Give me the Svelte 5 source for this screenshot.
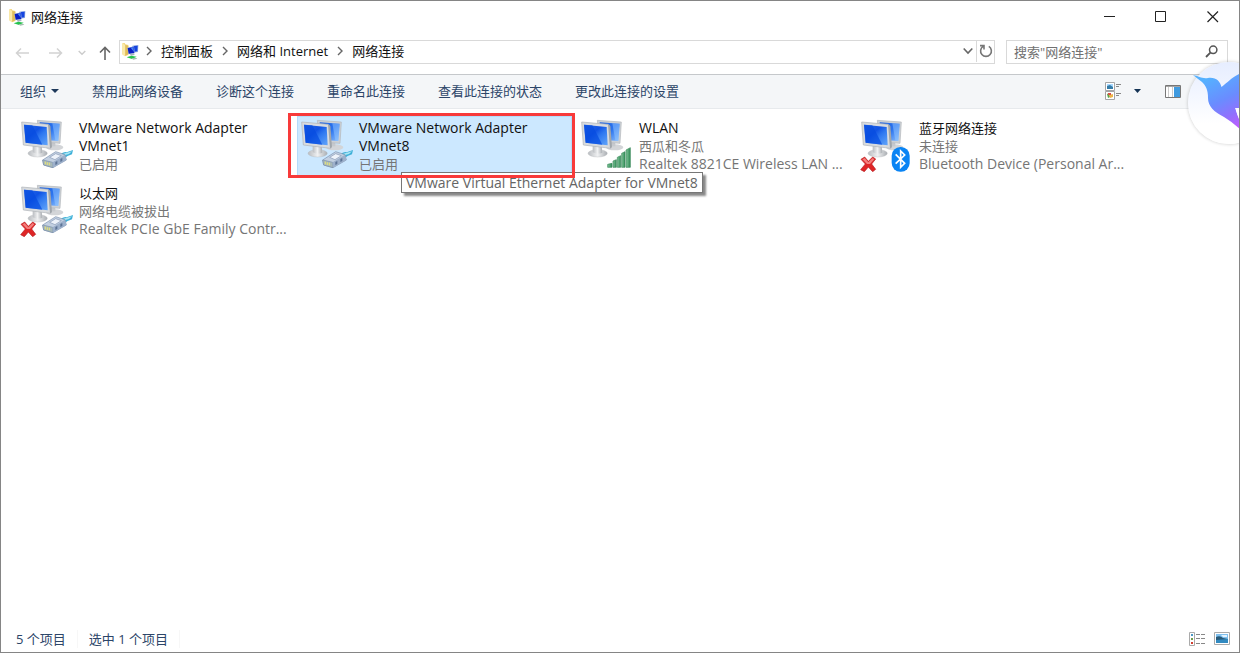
<script>
  const crumbs = ['控制面板', '网络和 Internet', '网络连接'];
  const commands = ['禁用此网络设备', '诊断这个连接', '重命名此连接', '查看此连接的状态', '更改此连接的设置'];
  const adapters = [
    { name: 'VMware Network Adapter VMnet1', lines: ['已启用'], badge: 'cable' },
    { name: 'VMware Network Adapter VMnet8', lines: ['已启用'], badge: 'cable', tip: 'VMware Virtual Ethernet Adapter for VMnet8' },
    { name: 'WLAN', lines: ['西瓜和冬瓜', 'Realtek 8821CE Wireless LAN ...'], badge: 'signal' },
    { name: '蓝牙网络连接', lines: ['未连接', 'Bluetooth Device (Personal Ar...'], badge: 'bluetooth', off: true },
    { name: '以太网', lines: ['网络电缆被拔出', 'Realtek PCIe GbE Family Contr...'], badge: 'cable', off: true }
  ];
  const isHan = (text) => /\p{Script=Han}/u.test(text);
  let selected = $state(1);
  let query = $state('');
</script>

{#snippet folderIcon()}
  <svg class="folder" width="17" height="17" viewBox="0 0 51 51" aria-hidden="true">
    <path d="M1 1L8 0L10 4L19 6V36L9 40L1 34Z" fill="#f3d77e" />
    <path d="M1 1L9 6V40L1 34Z" fill="#fbeaa9" />
    <path d="M10 6L19 8V34L10 38Z" fill="#dfbd5c" />
    <path d="M31 8L49 6L48 27L33 29Z" fill="#93aee0" />
    <path d="M32 9L47 8L46 25L34 26Z" fill="#1544e0" />
    <path d="M16 14L36 10L38 31L20 34Z" fill="#aebfdf" />
    <path d="M17 15L35 12L37 30L20 32Z" fill="#0a1fc4" />
    <path d="M26 14L34 13L36 27Z" fill="#4a86f5" />
    <path d="M24 33L36 31L38 36L26 38Z" fill="#a6b1bf" />
    <path d="M14 43L28 38L44 41L30 48Z" fill="#25c44c" />
    <path d="M28 46L42 44L46 47L34 50Z" fill="#a5bfb0" />
  </svg>
{/snippet}

{#snippet crumbArrow()}
  <svg class="crumb-arrow" width="24" height="12" viewBox="0 0 24 12" aria-hidden="true">
    <path d="M10 2L14 6L10 10" fill="none" stroke="#666" stroke-width="1.4" />
  </svg>
{/snippet}

{#snippet adapterIcon(badge, off)}
  <svg class="adapter-icon" width="55" height="55" viewBox="15 15 165 165" aria-hidden="true">
    <defs>
      <linearGradient id="screen" x1="0" y1="0" x2="1" y2="1">
        <stop offset="0" stop-color="#2c6be6" />
        <stop offset=".4" stop-color="#1053e4" />
        <stop offset=".6" stop-color="#2f78f0" />
        <stop offset="1" stop-color="#62a6fb" />
      </linearGradient>
      <linearGradient id="screenBack" x1="0" y1="0" x2="1" y2="1">
        <stop offset="0" stop-color="#1f62e0" />
        <stop offset=".5" stop-color="#2c74ee" />
        <stop offset="1" stop-color="#8cc0ff" />
      </linearGradient>
      <linearGradient id="stand" x1="0" y1="0" x2="1" y2="0">
        <stop offset="0" stop-color="#b9bcc0" />
        <stop offset=".5" stop-color="#f0f1f2" />
        <stop offset="1" stop-color="#a9adb2" />
      </linearGradient>
      <linearGradient id="bar" x1="0" y1="0" x2="1" y2="0">
        <stop offset="0" stop-color="#83c79c" />
        <stop offset="1" stop-color="#2f8a55" />
      </linearGradient>
    </defs>
    <ellipse cx="119" cy="106" rx="26" ry="9" fill="#d3d5d8" />
    <path d="M101 86H121V103H101Z" fill="#c6c9cd" />
    <path d="M67 25L139 30L135 94L74 90Z" fill="#cdd1d5" stroke="#b2b7bb" stroke-width="2" />
    <path d="M74 31L134 35L130 87L77 83Z" fill="url(#screenBack)" />
    <path d="M112 34L134 35L130 87L121 86Z" fill="#94c8ff" opacity=".5" />
    <ellipse cx="68" cy="124" rx="29" ry="11" fill="url(#stand)" stroke="#b0b3b7" />
    <path d="M53 100H80L82 122Q68 128 53 121Z" fill="url(#stand)" />
    <path d="M20 30L98 37Q103 38 103 43L107 109L25 99Z" fill="#d8dbde" stroke="#adb2b7" stroke-width="2" />
    <path d="M99 37L106 42L111 106L105 109Z" fill="#a1a6ab" />
    <path d="M27 38L95 45L98 100L32 92Z" fill="url(#screen)" />
    <path d="M27 38L52 40L82 98L32 92Z" fill="#064be0" opacity=".7" />
    {#if badge === 'cable'}
      <path d="M136 128Q145 118 155 121L174 114L171 127Q156 131 148 139Z" fill="#3fb0d8" />
      <path d="M145 125L171 118L162 126L148 130Z" fill="#a8e5f3" />
      <path d="M83 144L122 119L150 128L154 144L114 167L86 159Z" fill="#c3d0e1" stroke="#7a8fae" stroke-width="2" />
      <path d="M83 144L113 151L114 167L86 159Z" fill="#a9b9b8" stroke="#7a8fae" stroke-width="2" />
      <path d="M113 151L150 128L154 144L114 167Z" fill="#9db0cb" />
      <path d="M104 136L122 125L139 131L120 143Z" fill="#eef3fa" stroke="#8799b6" stroke-width="2" />
      <path d="M91 149V157M97 151V159M103 152V160" stroke="#e6e475" stroke-width="3" />
      <path d="M121 150L127 147V156L121 159ZM136 141L142 138V147L136 150Z" fill="#5d7496" />
    {:else if badge === 'signal'}
      <g fill="url(#bar)" stroke="#398a5a" stroke-width="2" transform="translate(4 0)">
        <path d="M94 157L107 154V166H94Z" />
        <path d="M110 147L120 143V166H110Z" />
        <path d="M123 136L133 131V166H123Z" />
        <path d="M136 124L146 119V166H136Z" />
        <path d="M149 114L162 107V166H149Z" />
      </g>
    {:else}
      <rect x="110" y="105" width="54" height="74" rx="26" fill="#0a84f4" />
      <path d="M122 127L149 154L137 166V117L149 129L122 155" fill="none" stroke="#fff" stroke-width="5" />
    {/if}
    {#if off}
      <path d="M18 142L29 135L40 148L53 135L62 141L50 156L62 172L53 179L40 165L28 179L17 173L31 156Z" fill="#df2526" stroke="#b51e22" stroke-width="2" />
      <path d="M22 142L29 138L40 151L53 138L58 142L45 156H36Z" fill="#f47f7d" />
    {/if}
  </svg>
{/snippet}

<div class="window">
  <header class="titlebar">
    {@render folderIcon()}
    <h1>网络连接</h1>
    <div class="window-controls">
      <button aria-label="最小化"><svg width="12" height="12" viewBox="0 0 12 12"><path d="M1 5.5H12" stroke="#222" /></svg></button>
      <button aria-label="最大化"><svg width="12" height="12" viewBox="0 0 12 12"><path d="M.5 .5H10.5V10.5H.5Z" fill="none" stroke="#222" /></svg></button>
      <button aria-label="关闭"><svg width="12" height="12" viewBox="0 0 12 12"><path d="M.5 .5L11 11M11 .5L.5 11" stroke="#222" stroke-width="1.2" /></svg></button>
    </div>
  </header>

  <nav class="navbar">
    <div class="history">
      <button aria-label="后退"><svg width="14" height="12" viewBox="0 0 14 12"><path d="M14 6H1.5M6 1.5L1.5 6L6 10.5" fill="none" stroke="#d2d2d2" stroke-width="1.5" /></svg></button>
      <button aria-label="前进"><svg width="14" height="12" viewBox="0 0 14 12"><path d="M0 6H12.5M8 1.5L12.5 6L8 10.5" fill="none" stroke="#d2d2d2" stroke-width="1.5" /></svg></button>
      <button class="recent" aria-label="最近位置"><svg width="8" height="6" viewBox="0 0 8 6"><path d="M.7 1L4 4.3L7.3 1" fill="none" stroke="#ccc" stroke-width="1.4" /></svg></button>
      <button class="up" aria-label="上移"><svg width="12" height="14" viewBox="0 0 12 14"><path d="M6 14V1.5M1 6.5L6 1.5L11 6.5" fill="none" stroke="#666" stroke-width="1.6" /></svg></button>
    </div>
    <div class="address">
      {@render folderIcon()}
      {#each crumbs as crumb}
        {@render crumbArrow()}<button class="crumb">{crumb}</button>
      {/each}
      <button class="drop" aria-label="以前的位置"><svg width="10" height="8" viewBox="0 0 10 8"><path d="M.7 1.5L5 6L9.3 1.5" fill="none" stroke="#666" stroke-width="1.6" /></svg></button>
      <button class="refresh" aria-label="刷新"><svg width="14" height="14" viewBox="0 0 14 14"><path d="M4.2 2.4A5.4 5.4 0 1 0 9.8 2.4M1 1.6H5V5.6" fill="none" stroke="#777" stroke-width="1.6" /></svg></button>
    </div>
    <label class="search">
      <input type="text" aria-label="搜索网络连接" placeholder={'搜索"网络连接"'} bind:value={query} />
      <svg width="13" height="13" viewBox="0 0 13 13" aria-hidden="true"><circle cx="8.2" cy="4.8" r="3.7" fill="none" stroke="#555" stroke-width="1.5" /><path d="M5.4 7.6L1 12" stroke="#555" stroke-width="1.8" /></svg>
    </label>
  </nav>

  <div class="toolbar">
    <button>组织<svg class="caret" width="8" height="4" viewBox="0 0 8 4" aria-hidden="true"><path d="M0 0H8L4 4Z" fill="#1e395b" /></svg></button>
    {#each commands as command}<button>{command}</button>{/each}
    <div class="view-tools">
      <button aria-label="更改视图">
        <svg width="17" height="18" viewBox="0 0 17 18">
          <path d="M.5 .5H9.5V8.5H.5ZM.5 9.5H9.5V17.5H.5Z" fill="#fff" stroke="#a5a5a5" />
          <path d="M2 2H8V5H2Z" fill="#a8d8ff" /><path d="M2 4L5 3L8 5V7H2Z" fill="#347ca8" />
          <path d="M2 12L4 11L5 15L3 16Z" fill="#56a54c" /><path d="M4 13L8 12V15L5 16Z" fill="#edb447" /><path d="M3 11H6V13H3Z" fill="#d85348" />
          <path d="M11 2.5H16M11 4.5H14M11 11.5H16M11 13.5H14" stroke="#888" />
        </svg>
      </button>
      <button aria-label="更多选项"><svg width="7" height="4" viewBox="0 0 7 4"><path d="M0 0H7L3.5 4Z" fill="#143354" /></svg></button>
      <button class="pane" aria-label="预览窗格">
        <svg width="16" height="13" viewBox="0 0 16 13"><path d="M.5 .5H15.5V12.5H.5Z" fill="#fff" stroke="#777" /><path d="M3.5 1V12M7.5 1V12" stroke="#ccc" /><path d="M9 2H15V12H9Z" fill="#409be0" /><path d="M1 1.5H15" stroke="#a5a5a5" /></svg>
      </button>
    </div>
  </div>

  <main>
    <ul class="adapters">
      {#each adapters as adapter, i}
        <li class:selected={selected === i}>
          <button class="adapter" onclick={() => (selected = i)}>
            {@render adapterIcon(adapter.badge, adapter.off)}
            <span class="details">
              <span class="name" class:han={isHan(adapter.name)}>{adapter.name}</span>
              {#each adapter.lines as line}<span class:han={isHan(line)}>{line}</span>{/each}
            </span>
          </button>
          {#if adapter.tip && selected === i}
            <span class="tip" role="tooltip">{adapter.tip}</span>
            <span class="marker"></span>
          {/if}
        </li>
      {/each}
    </ul>
  </main>

  <footer class="statusbar">
    <span>{adapters.length} 个项目</span>
    <span>选中 1 个项目</span>
    <div class="layout-tools">
      <button aria-label="详细信息">
        <svg width="17" height="14" viewBox="0 0 17 14"><path d="M.5 .5H5.5V13.5H.5Z" fill="#fff" stroke="#aaa" /><path d="M2 2H4V4H2Z" fill="#4b98c5" /><path d="M2 6H4V8H2Z" fill="#6d9c4a" /><path d="M2 10H4V12H2Z" fill="#d23d30" /><path d="M7 2.5H11M12 2.5H16M7 6.5H11M12 6.5H16M7 11.5H11M12 11.5H16" stroke="#888" /></svg>
      </button>
      <button aria-label="大图标">
        <svg width="16" height="13" viewBox="0 0 16 13"><path d="M.5 .5H15.5V12.5H.5Z" fill="#fff" stroke="#aaa" /><path d="M2 2H14V11H2Z" fill="#7fc0ef" /><path d="M2 5Q6 3 9 6L14 7V9H2Z" fill="#285a78" /><path d="M2 8L14 7V11H2Z" fill="#328ac0" /><path d="M7 3H13V5H9Z" fill="#e4f4ff" /></svg>
      </button>
    </div>
  </footer>

  <button class="assistant" aria-label="助手">
    <svg width="82" height="82" viewBox="0 0 82 82">
      <defs>
        <linearGradient id="bird" x1="24" y1="14" x2="50" y2="66" gradientUnits="userSpaceOnUse">
          <stop offset="0" stop-color="#55b1ff" /><stop offset=".45" stop-color="#6a8cff" /><stop offset=".75" stop-color="#9170fd" /><stop offset="1" stop-color="#c05cff" />
        </linearGradient>
      </defs>
      <path d="M5 13C11 14 14 17 20 16C28 15 32 19 33.500 25C40 20 44 15 53 11L70 5V46H47L52 59L56 71Q46 61 36 55C26 50 20 44 20 36C20 28 18 24 14 20Q10 17 5 13Z" fill="url(#bird)" />
      <path d="M48 48L58 46V68Q50 58 48 48Z" fill="#fff" />
    </svg>
  </button>
</div>

<style>
  :global(body) { margin: 0; background: #fff; }
  * { box-sizing: border-box; }
  .window {
    position: relative;
    display: flex;
    flex-direction: column;
    min-height: 100vh;
    overflow: hidden;
    border: 1px solid #858585;
    background: #fff;
    color: #111;
    font: 13px/18px "Open Sans", "Noto Sans CJK SC", sans-serif;
  }
  button { display: flex; align-items: center; padding: 0; border: 0; background: none; color: inherit; font: inherit; white-space: nowrap; }
  svg { display: block; flex: none; }
  .titlebar { display: flex; align-items: center; height: 32px; padding-left: 8px; gap: 5px; }
  h1 { margin: 0; font-size: 13px; font-weight: 400; }
  .window-controls { display: flex; margin-left: auto; }
  .window-controls button { justify-content: center; width: 52px; height: 32px; }
  .navbar { display: flex; align-items: center; height: 41px; padding: 0 11px 4px 14px; }
  .history { display: flex; align-items: center; width: 104px; padding-top: 2px; }
  .history button { margin-right: 20px; }
  .history .recent { margin: 0 13px 0 -5px; }
  .history .up { margin: 0; }
  .address { display: flex; flex: 1; align-items: center; height: 24px; padding: 0 0 1px 2px; border: 1px solid #d9d9d9; }
  .drop { margin-left: auto; padding: 0 3px; }
  .folder + .crumb-arrow { margin-left: -2px; }
  .refresh { justify-content: center; width: 18px; height: 22px; border-left: 1px solid #d9d9d9; }
  .search { display: flex; align-items: center; width: 222px; height: 24px; margin-left: 11px; padding: 0 9px 0 7px; border: 1px solid #d9d9d9; }
  .search input { flex: 1; min-width: 0; padding: 0; border: 0; outline: 0; background: none; font: inherit; }
  .search input::placeholder { color: #707070; opacity: 1; }
  .toolbar { display: flex; align-items: center; gap: 33px; height: 35px; padding: 0 58px 1px 19px; border-top: 1px solid #c5c8cb; border-bottom: 1px solid #e7eaed; background: #f4f6f8; color: #2c4568; }
  .caret { margin-left: 5px; }
  .view-tools { display: flex; align-items: center; gap: 12px; margin-left: auto; }
  .view-tools .pane { margin-left: 12px; }
  main { flex: 1; padding: 7px 16px; }
  .adapters { display: grid; grid-template-columns: repeat(auto-fill, 275px); gap: 5px; margin: 0; padding: 0; list-style: none; }
  li { position: relative; height: 60px; }
  .adapter { align-items: flex-start; width: 100%; height: 100%; padding: 1px 3px; text-align: left; }
  .selected .adapter { background: #cce8ff; box-shadow: inset 0 0 0 1px #b4dcfb; }
  .details { display: flex; flex: 1; flex-direction: column; min-width: 0; padding: 2px 0 0 4px; color: #757575; font-size: 14px; }
  .name { max-width: 190px; color: #111; white-space: normal; }
  .han { font-size: 13px; }
  .tip { position: absolute; top: 56px; left: 104px; z-index: 1; padding: 0 4px; border: 1px solid #777; background: #fff; box-shadow: 3px 3px 2px #0007; color: #656565; font-size: 14px; line-height: 19px; white-space: nowrap; }
  .marker { position: absolute; inset: -3px -3px -2px -9px; z-index: 2; border: 3px solid #f83a3a; pointer-events: none; }
  .statusbar { display: flex; align-items: center; height: 27px; padding: 0 9px 0 15px; color: #2c4568; }
  .statusbar span { margin-right: 11px; padding-right: 11px; border-right: 1px solid #f7f7f7; }
  .layout-tools { display: flex; align-items: center; gap: 8px; margin-left: auto; }
  .assistant { position: absolute; top: 61px; right: -31px; z-index: 3; border-radius: 50%; background: linear-gradient(#e6edff, #fff 75%); box-shadow: 0 0 3px 1px #0002; }
</style>
